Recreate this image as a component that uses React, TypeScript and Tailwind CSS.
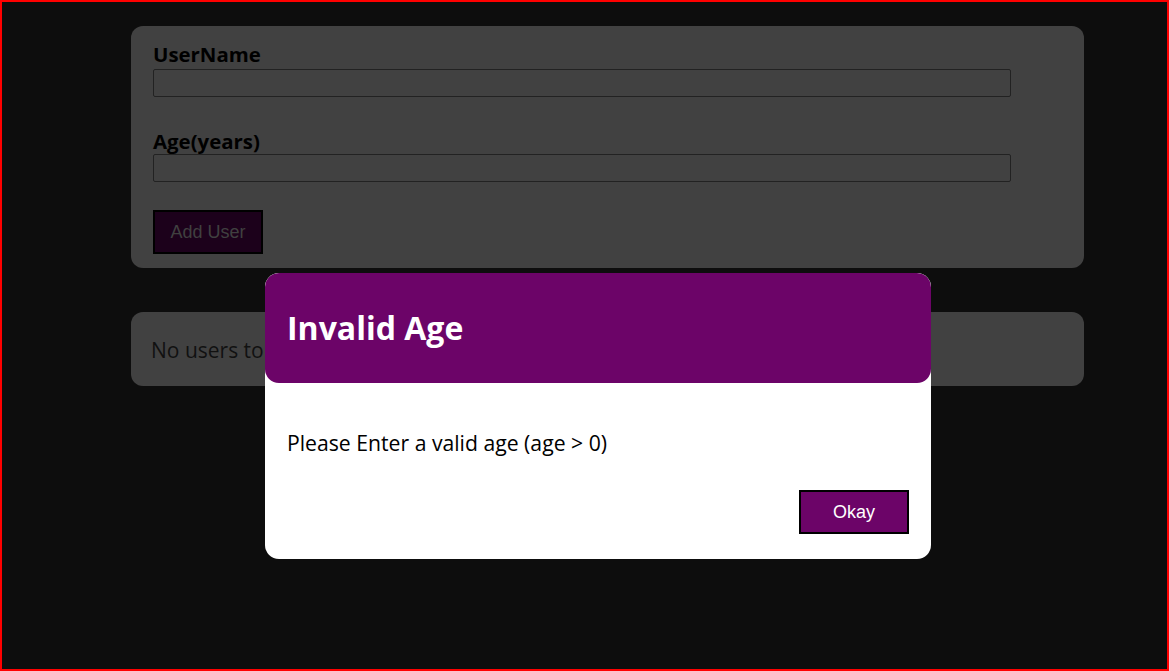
import React from "react";

const Card: React.FC<{ className?: string; children: React.ReactNode }> = ({ className = "", children }) => (
  <div className={`w-[953px] ml-[129px] rounded-xl bg-[#414141] ${className}`}>{children}</div>
);

const Field: React.FC<{ label: string; gap: string }> = ({ label, gap }) => (
  <div>
    <label className={`block text-[20.4px] leading-[20px] font-bold text-black font-['Open_Sans',sans-serif] ${gap}`}>{label}</label>
    <input className="block w-[858px] h-[28px] border border-[#222] rounded-[2px] bg-transparent" />
  </div>
);

export default function App() {
  return (
    <div className="relative h-[671px] border-2 border-[#ff0000] bg-[#0d0d0d] overflow-hidden">
      {/* form */}
      <Card className="mt-[24px] px-[22px] pt-[18px] pb-[14px]">
        <div className="flex flex-col gap-[34px]">
          <Field label="UserName" gap="mb-[5px]" />
          <Field label="Age(years)" gap="mb-[3px]" />
        </div>
        <button className="mt-[28px] w-[110px] h-[44px] bg-[#1c011b] border-2 border-black text-[#404040] text-[18px] font-['Liberation_Sans',Arial,sans-serif]">
          Add User
        </button>
      </Card>

      {/* list */}
      <Card className="mt-[44px] h-[74px] px-[20px] pt-[3px] flex items-center">
        <p className="text-[21px] text-[#111] font-['Open_Sans',sans-serif]">No users to show.</p>
      </Card>

      {/* modal */}
      <div className="absolute left-[263px] top-[271px] w-[666px] rounded-[14px] bg-white overflow-hidden">
        <header className="h-[110px] bg-[#6c0468] px-[22px] flex items-center rounded-[14px]">
          <h2 className="text-white text-[32px] font-bold font-['Open_Sans',sans-serif]">Invalid Age</h2>
        </header>
        <div className="px-[22px] pt-[46px]">
          <p className="text-[21.2px] leading-[28px] text-black font-['Open_Sans',sans-serif]">Please Enter a valid age (age &gt; 0)</p>
        </div>
        <footer className="flex justify-end px-[22px] pt-[33px] pb-[25px]">
          <button className="w-[110px] h-[44px] bg-[#6c0468] border-2 border-black text-white text-[18px] font-['Liberation_Sans',Arial,sans-serif]">
            Okay
          </button>
        </footer>
      </div>
    </div>
  );
}
